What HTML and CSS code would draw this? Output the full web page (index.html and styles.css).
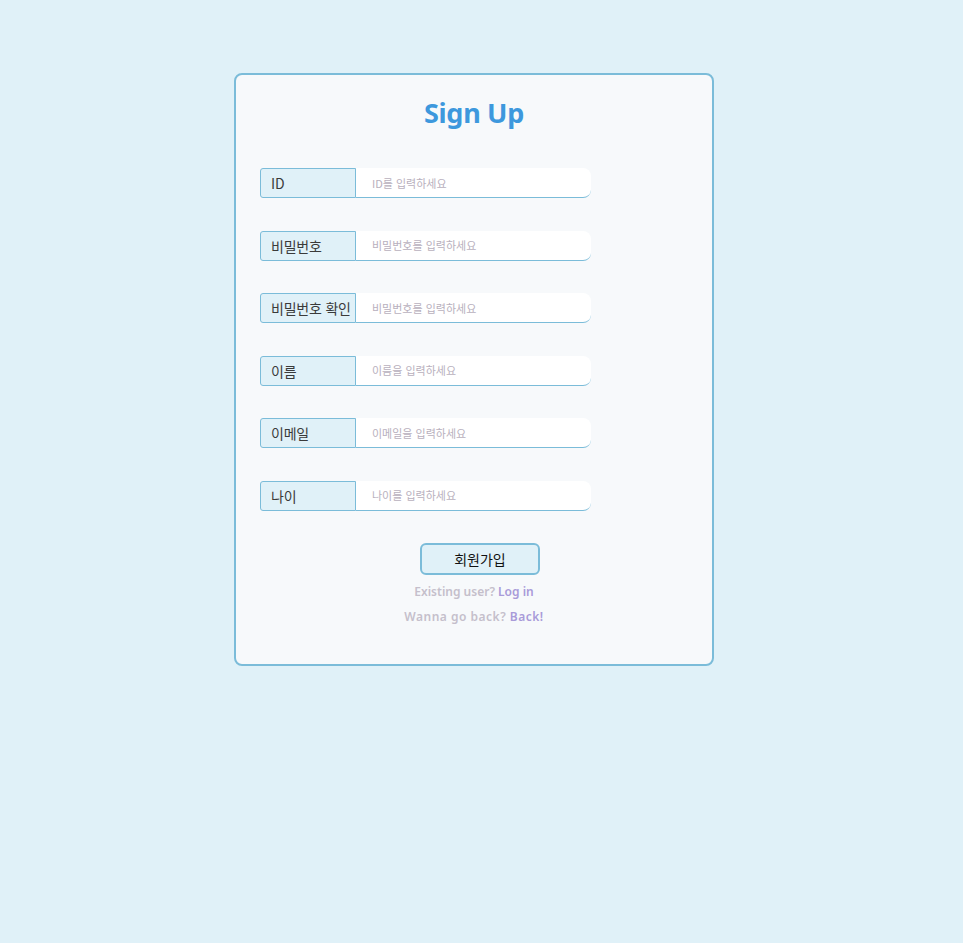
FILE: index.html
```html
<!DOCTYPE html>
<html lang="ko">
<head>
<meta charset="utf-8">
<link rel="stylesheet" href="styles.css">
</head>
<body>
<div class="page">
  <div class="card">
    <h1 class="title">Sign Up</h1>
    <div class="fields">
      <div class="row"><span class="label">ID</span><input class="input" placeholder="ID를 입력하세요"></div>
      <div class="row"><span class="label">비밀번호</span><input class="input" placeholder="비밀번호를 입력하세요"></div>
      <div class="row"><span class="label">비밀번호 확인</span><input class="input" placeholder="비밀번호를 입력하세요"></div>
      <div class="row"><span class="label">이름</span><input class="input" placeholder="이름을 입력하세요"></div>
      <div class="row"><span class="label">이메일</span><input class="input" placeholder="이메일을 입력하세요"></div>
      <div class="row"><span class="label">나이</span><input class="input" placeholder="나이를 입력하세요"></div>
    </div>
    <div class="actions">
      <button class="btn">회원가입</button>
      <p class="note">Existing user? <a class="link">Log in</a></p>
      <p class="note note-wide">Wanna go back? <a class="link">Back!</a></p>
    </div>
  </div>
</div>
</body>
</html>
```
FILE: styles.css
```css
html, body {
  margin: 0;
  padding: 0;
  background: #e0f1f8;
  font-family: "Noto Sans", "Noto Sans CJK KR", sans-serif;
}
.page {
  padding: 73px 0 0 234px;
  min-height: 870px;
}
.card {
  width: 476px;
  height: 589px;
  border: 2px solid #7bbcd9;
  border-radius: 8px;
  background: #f7f9fb;
  box-sizing: content-box;
  display: flex;
  flex-direction: column;
}
.title {
  margin: 19px 0 0 0;
  text-align: center;
  font-family: "Noto Sans", sans-serif;
  font-weight: 700;
  font-size: 27px;
  line-height: 38px;
  color: #3d98dd;
  letter-spacing: -0.3px;
  padding-left: 0;
}
.fields {
  margin: 36px 0 0 24px;
  display: flex;
  flex-direction: column;
  gap: 32.6px;
}
.row {
  display: flex;
  height: 30px;
}
.label {
  width: 84px;
  padding-left: 10px;
  border: 1px solid #7bbcd9;
  border-radius: 3px 0 0 3px;
  background: #e0f1f8;
  font-size: 14px;
  color: #3a3a3a;
  display: flex;
  align-items: center;
  white-space: nowrap;
  font-family: "Noto Sans CJK KR", "Noto Sans", sans-serif;
  letter-spacing: -0.2px;
}
.input {
  width: 235px;
  height: 30px;
  box-sizing: border-box;
  border: none;
  border-bottom: 1px solid #7bbcd9;
  border-radius: 0 8px 8px 0;
  background: #fff;
  padding: 0 0 0 16px;
  font-size: 11px;
  font-family: "Noto Sans CJK KR", "Noto Sans", sans-serif;
  outline: none;
}
.input::placeholder {
  color: #b8b0bd;
}
.actions {
  margin-top: 32px;
  display: flex;
  flex-direction: column;
  align-items: center;
  padding-left: 12px;
}
.btn {
  width: 120px;
  height: 32px;
  border: 2px solid #7bbcd9;
  border-radius: 6px;
  background: #e0f1f8;
  font-size: 14px;
  color: #111;
  font-family: "Noto Sans CJK KR", "Noto Sans", sans-serif;
  padding: 0;
}
.note {
  margin: 0;
  font-size: 12px;
  font-weight: 600;
  color: #c5bfcb;
  line-height: 16px;
  margin-top: 9px;
  font-family: "Noto Sans", sans-serif;
  padding-right: 12px;
}
.note + .note {
  margin-top: 9px;
}
.note-wide {
  letter-spacing: 0.5px;
}
.link {
  color: #a99bd9;
}
```
